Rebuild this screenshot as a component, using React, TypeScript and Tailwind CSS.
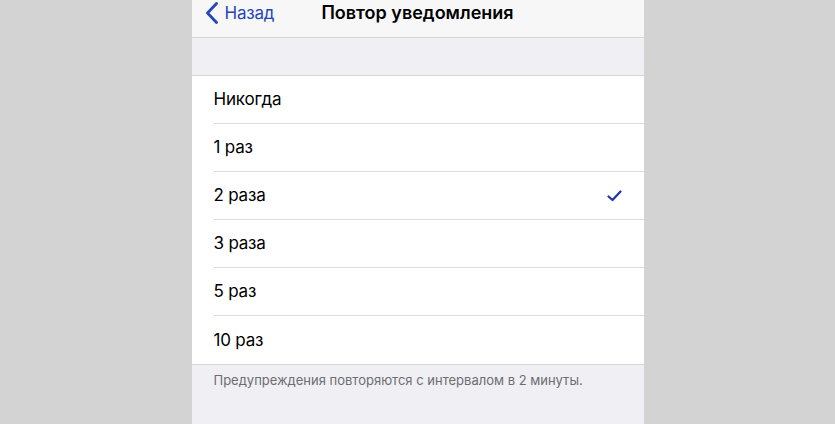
const rows = ["Никогда", "1 раз", "2 раза", "3 раза", "5 раз", "10 раз"]

function App() {
  return (
    <div className="flex justify-center w-full h-[424px] bg-[#d3d3d3] overflow-hidden" style={{ fontFamily: "Inter, 'Noto Sans', sans-serif" }}>
      <div className="w-[452px] h-full bg-[#efeff4] flex flex-col">
        {/* nav bar */}
        <div className="relative h-[38px] shrink-0 bg-[#f7f7f7] border-b border-[#d6d6da] flex items-start">
          <div className="flex items-center pl-[13px] pt-[2px] text-[#2446b8]">
            <svg width="14" height="22" viewBox="0 0 14 22" className="mr-[6px]">
              <path d="M11.5 1.5 L2.5 11 L11.5 20.5" fill="none" stroke="#2446b8" strokeWidth="2.8" strokeLinecap="round" strokeLinejoin="round" />
            </svg>
            <span className="text-[17px] leading-[22px] tracking-[-0.2px]">Назад</span>
          </div>
          <div className="absolute inset-x-0 top-[2px] text-center text-[18px] leading-[22px] font-semibold text-black">
            Повтор уведомления
          </div>
        </div>

        {/* spacer */}
        <div className="h-[37px] shrink-0" />

        {/* list */}
        <div className="bg-white border-t border-b border-[#d6d6da]">
          {rows.map((r, i) => (
            <div key={r} className="pl-[22px]">
              <div className={"h-[48px] flex items-center justify-between pr-[22px] " + (i < rows.length - 1 ? "border-b border-[#dcdcdf]" : "")}>
                <span className="text-[17px] text-black tracking-[-0.2px] pt-[1px]">{r}</span>
                {i === 2 && (
                  <svg width="15" height="12" viewBox="0 0 15 12">
                    <path d="M1.5 6.5 L5.5 10 L13.5 1.5" fill="none" stroke="#1f35a3" strokeWidth="2.2" strokeLinecap="round" strokeLinejoin="round" />
                  </svg>
                )}
              </div>
            </div>
          ))}
        </div>

        {/* footer */}
        <div className="pl-[22px] pt-[6px] text-[13px] leading-[18px] text-[#6d6d72]">
          Предупреждения повторяются с интервалом в 2 минуты.
        </div>
      </div>
    </div>
  )
}

export default App
